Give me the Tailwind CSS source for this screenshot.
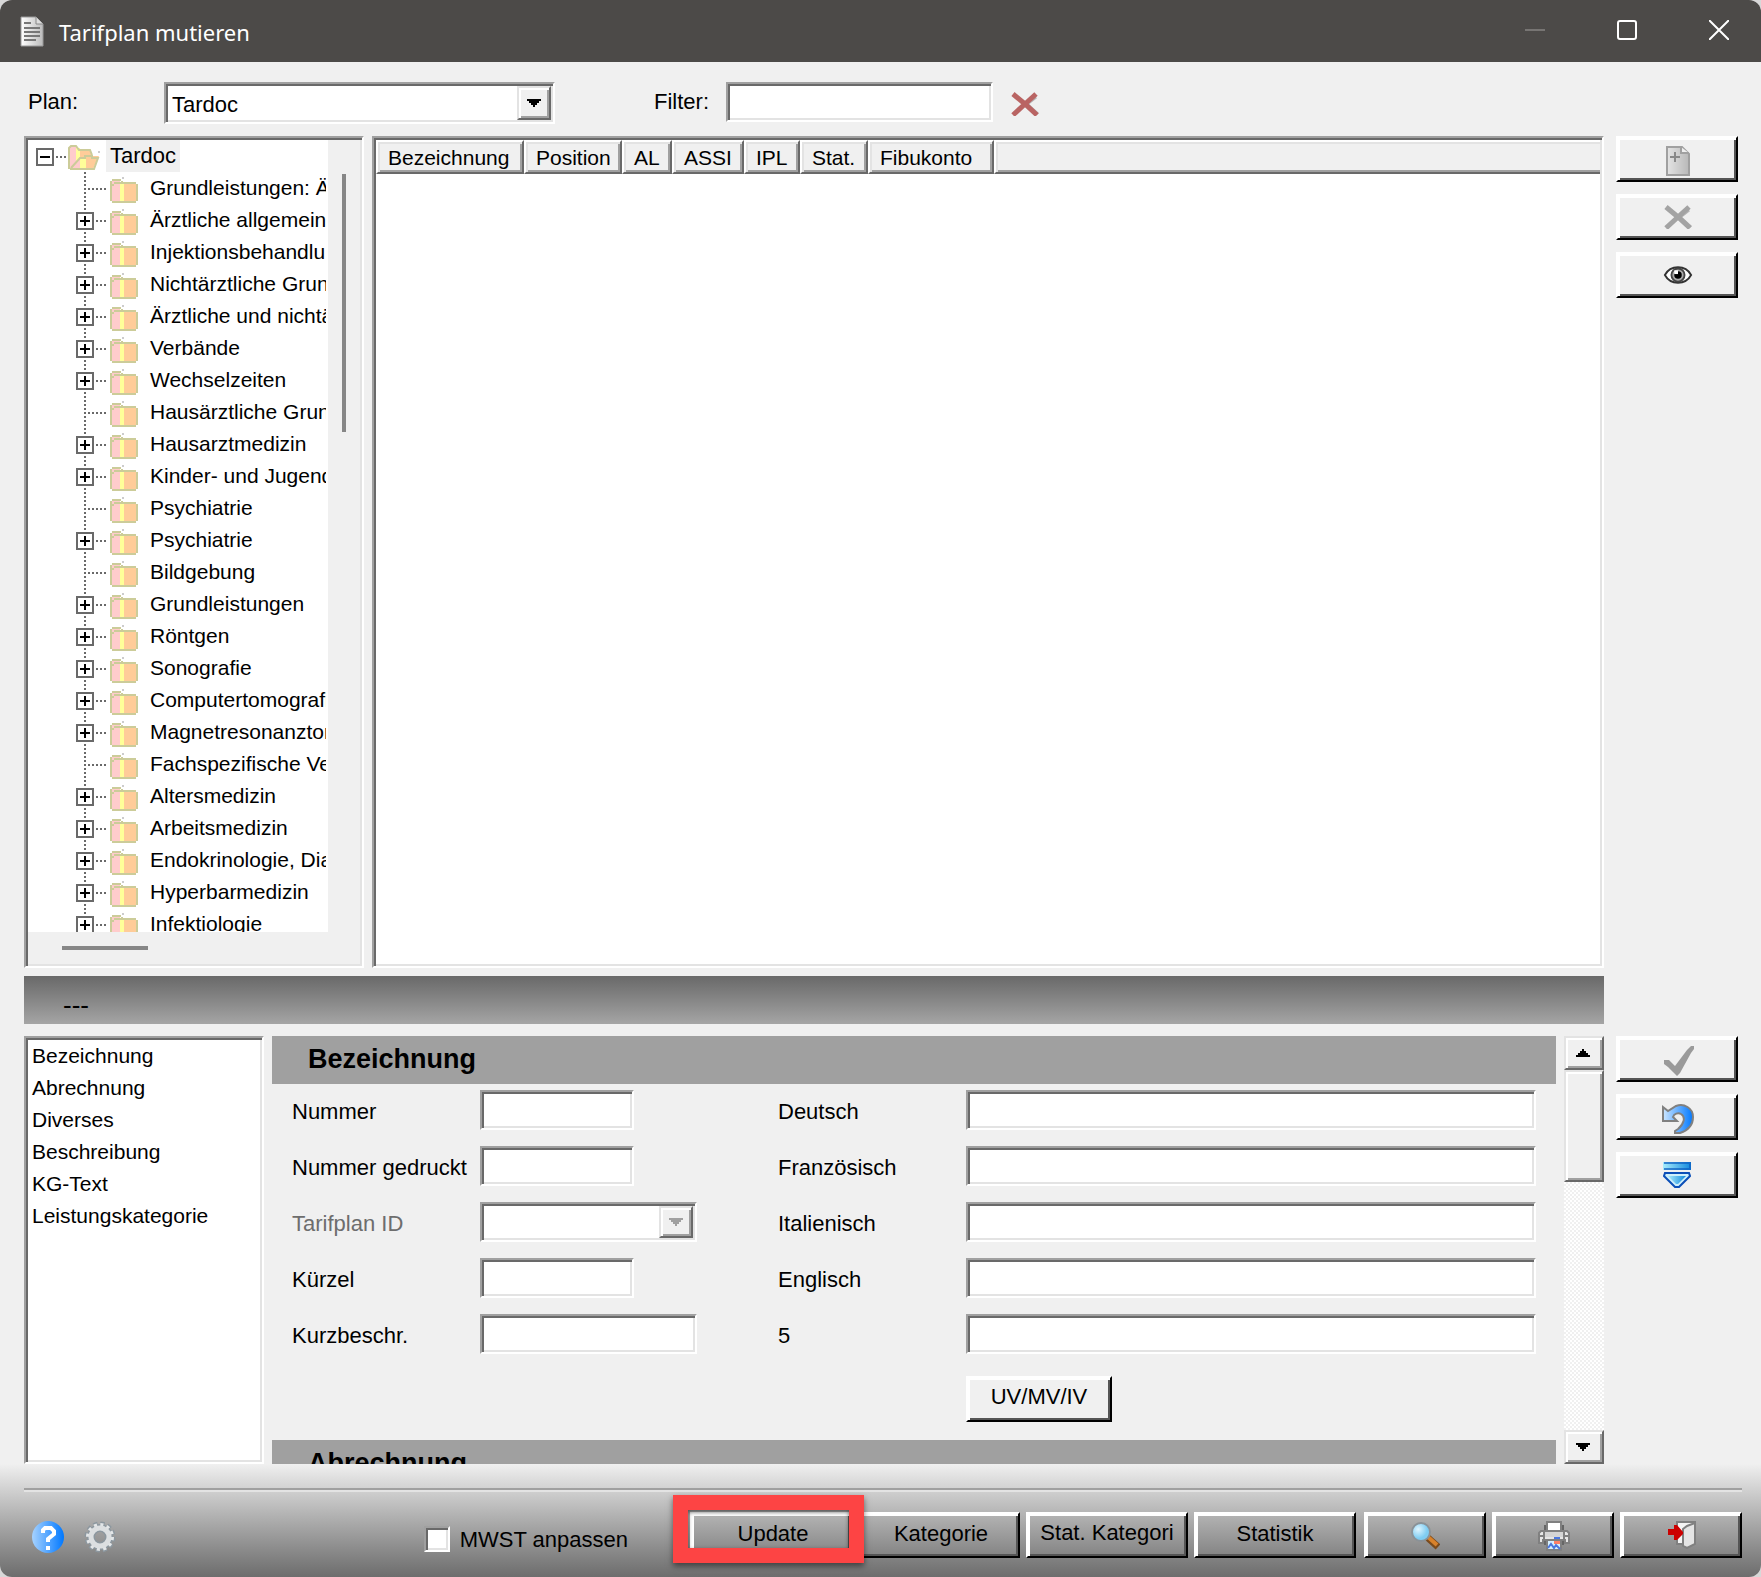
<!DOCTYPE html>
<html lang="de">
<head>
    <meta charset="UTF-8">
    <meta name="viewport" content="width=device-width, initial-scale=1.0">
    <title>Tarifplan mutieren</title>
    <script src="https://cdn.jsdelivr.net/npm/@tailwindcss/browser@4"></script>
</head>
<body class="bg-[#d8d8d8] font-['Liberation_Sans',sans-serif] text-[22px] text-black">

    <!-- Shared icons -->
    <svg class="hidden" aria-hidden="true">
        <symbol id="folder" viewBox="0 0 28 26">
            <path fill="#ffcccc" d="M2 3h8v21H2z"/>
            <path fill="#ffff99" d="M10 6h4v18h-4z"/>
            <path fill="#ffcc99" d="M14 6h12v18H14z"/>
            <path fill="#cccc99" d="M2 2h9v2H2zM0 4h2v20H0zM11 4h2v2h-2zM4 5h22v2H4zM2 7h2v2H2zM26 7h2v17h-2zM2 24h24v2H2z"/>
            <path fill="#ccc" d="M12 0h2v2h-2z"/>
        </symbol>
        <symbol id="folder-open" viewBox="0 0 32 26">
            <path fill="#ffcccc" d="M1 3l2-2h6v22l-6 1-2-2z"/>
            <path fill="#ffff99" d="M8 3h4v20H8z"/>
            <path fill="#ffcc99" d="M12 5h10l2 6h7l-6 13H12z"/>
            <path fill="#ffcccc" d="M12 12L3 24h9z"/>
            <path fill="#ffff99" d="M12 12h6v12h-6z"/>
            <path fill="none" stroke="#cccc99" stroke-width="2" d="M1 24V3l2-2h5l3 4h11l2 5M3 23l9-10h5v-2h7v2h6l-4 11H2"/>
            <path fill="#ccc" d="M30 6h2v2h-2z"/>
        </symbol>
        <symbol id="cross" viewBox="0 0 28 24">
            <path fill="none" stroke="#777" stroke-opacity=".5" stroke-width="3" d="M25 5L16 12l11 10"/>
            <path fill="none" stroke="currentColor" stroke-width="5" d="M2 2L14 12 26 23M25 2L14 12 2 23"/>
        </symbol>
    </svg>

    <div class="flex h-screen flex-col overflow-hidden rounded-xl bg-[#f0f0f0]">

        <!-- Title bar -->
        <header class="flex h-[62px] shrink-0 items-center bg-[#4c4a48] pl-5 text-white">
            <svg class="h-8 w-6" viewBox="0 0 24 32">
                <defs><linearGradient id="doc"><stop offset="0" stop-color="#fff"/><stop offset="1" stop-color="#bbb"/></linearGradient></defs>
                <path fill="url(#doc)" stroke="#999" d="M1 2h15l7 7v22H1z"/>
                <path fill="#ddd" stroke="#888" d="M16 2v7h7"/>
                <path stroke="#777" stroke-width="2" d="M4 8h7M4 13h16M4 17h16M4 21h16M4 25h12"/>
            </svg>
            <h1 class="ml-[15px] pt-0.5 font-['Noto_Sans',sans-serif] text-[22px]">Tarifplan mutieren</h1>
            <div class="ml-auto flex h-full items-center pb-0.5">
                <button class="flex h-full w-[92px] items-center justify-center" aria-label="Minimieren" disabled>
                    <svg class="size-5" viewBox="0 0 20 20"><path stroke="#777573" stroke-width="2" d="M0 10h20"/></svg>
                </button>
                <button class="flex h-full w-[92px] items-center justify-center" aria-label="Maximieren">
                    <svg class="size-5" viewBox="0 0 20 20"><rect x="1" y="1" width="18" height="18" rx="2" fill="none" stroke="#fff" stroke-width="2"/></svg>
                </button>
                <button class="flex h-full w-[88px] items-center justify-center pl-1" aria-label="Schliessen">
                    <svg class="size-5" viewBox="0 0 20 20"><path stroke="#fff" stroke-width="2" d="M0 0l20 20M20 0L0 20"/></svg>
                </button>
            </div>
        </header>

        <main class="flex min-h-0 flex-1 flex-col pt-5 pr-[23px] pl-6">

            <!-- Plan and filter -->
            <div class="mb-3 flex h-[42px] items-start">
                <label for="plan" class="w-[140px] pl-1 leading-10">Plan:</label>
                <div class="relative h-[42px] w-[391px] border-2 border-t-[#a0a0a0] border-r-white border-b-white border-l-[#a0a0a0] bg-white shadow-[inset_2px_2px_0_#696969,inset_-2px_-2px_0_#e3e3e3]">
                    <select id="plan" class="h-full w-full appearance-none bg-transparent pt-0.5 pl-1.5 text-[22px] outline-none">
                        <option>Tardoc</option>
                    </select>
                    <span class="pointer-events-none absolute top-0.5 right-0.5 bottom-0.5 flex w-[34px] items-center justify-center border-2 border-t-[#e3e3e3] border-r-[#696969] border-b-[#696969] border-l-[#e3e3e3] bg-[#f0f0f0] shadow-[inset_2px_2px_0_#fff,inset_-2px_-2px_0_#a0a0a0]">
                        <svg class="h-2 w-3.5" viewBox="0 0 14 8"><path d="M0 0h14v2h-2v2h-2v2H8v2H6V6H4V4H2V2H0z"/></svg>
                    </span>
                </div>
                <label for="filter" class="ml-[99px] w-[72px] leading-10">Filter:</label>
                <input id="filter" type="text" class="h-10 w-[267px] border-2 border-t-[#a0a0a0] border-r-white border-b-white border-l-[#a0a0a0] bg-white px-2 shadow-[inset_2px_2px_0_#696969,inset_-2px_-2px_0_#e3e3e3] outline-none">
                <button class="ml-4 flex h-11 w-8 items-center justify-center text-[#b96463]" aria-label="Filter löschen">
                    <svg class="h-6 w-7"><use href="#cross"/></svg>
                </button>
            </div>

            <div class="flex min-h-0 flex-1">
                <!-- Tree -->
                <nav class="mr-2 flex w-[340px] flex-col border-2 border-t-[#a0a0a0] border-r-white border-b-white border-l-[#a0a0a0] p-0.5 text-[21px] shadow-[inset_2px_2px_0_#696969,inset_-2px_-2px_0_#e3e3e3]">
                    <div class="flex min-h-0 flex-1">
                        <div class="min-w-0 flex-1 overflow-hidden border-r-2 border-white bg-white">
                            <div class="flex h-8 items-center pl-2">
                                <button aria-label="Tardoc schliessen">
                                    <svg class="h-8 w-8" viewBox="0 0 32 32">
                                        <rect x="1" y="9" width="16" height="16" fill="#fff" stroke="#696969" stroke-width="2"/>
                                        <path stroke="#000" stroke-width="2" d="M4 17h10"/>
                                        <path stroke="#696969" stroke-width="2" stroke-dasharray="2 2" d="M20 17h12"/>
                                    </svg>
                                </button>
                                <svg class="mt-1 h-[26px] w-8"><use href="#folder-open"/></svg>
                                <span class="ml-1.5 bg-[#f0f0f0] px-1 text-[22px] leading-8">Tardoc</span>
                            </div>
                            <ul id="tree"></ul>
                        </div>
                        <div class="flex w-8 justify-center pt-[34px]"><div class="h-[258px] w-1 bg-[#868686]"></div></div>
                    </div>
                    <div class="flex h-8 items-center pl-[34px]"><div class="h-1 w-[86px] bg-[#868686]"></div></div>
                </nav>

                <!-- Positions -->
                <div class="min-w-0 flex-1 border-2 border-t-[#a0a0a0] border-r-white border-b-white border-l-[#a0a0a0] bg-white p-0.5 text-[21px] shadow-[inset_2px_2px_0_#696969,inset_-2px_-2px_0_#e3e3e3]">
                    <table class="w-full table-fixed border-separate border-spacing-0 text-left">
                        <thead>
                            <tr class="h-[34px] bg-[#f0f0f0] leading-[28px]">
                                <th class="w-[148px] border-2 border-t-white border-r-[#696969] border-b-[#696969] border-l-white pt-0.5 pl-2.5 font-normal shadow-[inset_2px_2px_0_#e3e3e3,inset_-2px_-2px_0_#a0a0a0]">Bezeichnung</th>
                                <th class="w-[98px] border-2 border-t-white border-r-[#696969] border-b-[#696969] border-l-white pt-0.5 pl-2.5 font-normal shadow-[inset_2px_2px_0_#e3e3e3,inset_-2px_-2px_0_#a0a0a0]">Position</th>
                                <th class="w-[50px] border-2 border-t-white border-r-[#696969] border-b-[#696969] border-l-white pt-0.5 pl-2.5 font-normal shadow-[inset_2px_2px_0_#e3e3e3,inset_-2px_-2px_0_#a0a0a0]">AL</th>
                                <th class="w-[72px] border-2 border-t-white border-r-[#696969] border-b-[#696969] border-l-white pt-0.5 pl-2.5 font-normal shadow-[inset_2px_2px_0_#e3e3e3,inset_-2px_-2px_0_#a0a0a0]">ASSI</th>
                                <th class="w-[56px] border-2 border-t-white border-r-[#696969] border-b-[#696969] border-l-white pt-0.5 pl-2.5 font-normal shadow-[inset_2px_2px_0_#e3e3e3,inset_-2px_-2px_0_#a0a0a0]">IPL</th>
                                <th class="w-[68px] border-2 border-t-white border-r-[#696969] border-b-[#696969] border-l-white pt-0.5 pl-2.5 font-normal shadow-[inset_2px_2px_0_#e3e3e3,inset_-2px_-2px_0_#a0a0a0]">Stat.</th>
                                <th class="w-[126px] border-2 border-t-white border-r-[#696969] border-b-[#696969] border-l-white pt-0.5 pl-2.5 font-normal shadow-[inset_2px_2px_0_#e3e3e3,inset_-2px_-2px_0_#a0a0a0]">Fibukonto</th>
                                <td class="border-2 border-r-0 border-t-white border-b-[#696969] border-l-white shadow-[inset_2px_2px_0_#e3e3e3,inset_0_-2px_0_#a0a0a0]"></td>
                            </tr>
                        </thead>
                        <tbody></tbody>
                    </table>
                </div>

                <div class="ml-3 flex w-[122px] flex-col gap-3">
                    <button class="flex h-[46px] items-center justify-center border-2 border-t-white border-r-black border-b-black border-l-white pl-0.5 shadow-[inset_2px_2px_0_#fff,inset_-2px_-2px_0_#555]" aria-label="Neu" disabled>
                        <svg class="mt-1 h-[30px] w-6" viewBox="0 0 24 30">
                            <defs><linearGradient id="new"><stop offset="0" stop-color="#e4e4e4"/><stop offset="1" stop-color="#b8b8b8"/></linearGradient></defs>
                            <path fill="url(#new)" stroke="#a0a0a0" stroke-width="2" d="M1 1h15l7 7v21H1z"/>
                            <path fill="#eee" stroke="#a0a0a0" stroke-width="2" d="M15 1v6h8"/>
                            <path stroke="#888" stroke-width="2" d="M4 11h10M9 6v10"/>
                        </svg>
                    </button>
                    <button class="flex h-[46px] items-center justify-center border-2 border-t-white border-r-black border-b-black border-l-white pl-0.5 text-[#a3a3a3] shadow-[inset_2px_2px_0_#fff,inset_-2px_-2px_0_#555]" aria-label="Löschen" disabled>
                        <svg class="h-6 w-7"><use href="#cross"/></svg>
                    </button>
                    <button class="flex h-[46px] items-center justify-center border-2 border-t-white border-r-black border-b-black border-l-white pl-0.5 shadow-[inset_2px_2px_0_#fff,inset_-2px_-2px_0_#555]" aria-label="Anzeigen">
                        <svg class="h-5 w-[30px]" viewBox="0 0 32 20">
                            <path fill="#fff" stroke="#333" stroke-width="2" d="M2 10C8 -1 24 -1 30 10 24 21 8 21 2 10z"/>
                            <circle cx="16" cy="10" r="7" fill="#aaa" stroke="#444" stroke-width="2"/>
                            <circle cx="16" cy="10" r="4"/>
                            <path fill="#fff" d="M12 5h4v4h-4z"/>
                        </svg>
                    </button>
                </div>
            </div>

            <!-- Current position -->
            <div class="mt-2 mr-[134px] h-12 bg-linear-to-b from-[#696969] to-[#a5a5a5] pl-[39px] text-[26px] leading-[58px]">---</div>

            <div class="mt-3 flex h-[428px] shrink-0">
                <ul class="mr-2 w-60 border-2 border-t-[#a0a0a0] border-r-white border-b-white border-l-[#a0a0a0] bg-white p-0.5 pl-1.5 text-[21px] leading-8 shadow-[inset_2px_2px_0_#696969,inset_-2px_-2px_0_#e3e3e3]">
                    <li><a href="#bezeichnung">Bezeichnung</a></li>
                    <li><a href="#abrechnung">Abrechnung</a></li>
                    <li><a href="#diverses">Diverses</a></li>
                    <li><a href="#beschreibung">Beschreibung</a></li>
                    <li><a href="#kg-text">KG-Text</a></li>
                    <li><a href="#leistungskategorie">Leistungskategorie</a></li>
                </ul>

                <!-- Form -->
                <form class="min-w-0 flex-1 overflow-hidden">
                    <h2 id="bezeichnung" class="h-12 bg-[#a0a0a0] pl-9 text-[27px] leading-[46px] font-bold">Bezeichnung</h2>
                    <div class="grid grid-cols-[188px_298px_188px_1fr] gap-y-4 pt-1.5 pr-5 pl-5 leading-[44px]">
                        <label for="nummer" class="h-10">Nummer</label>
                        <input id="nummer" type="text" class="h-10 w-[154px] border-2 border-t-[#a0a0a0] border-r-white border-b-white border-l-[#a0a0a0] bg-white px-2 shadow-[inset_2px_2px_0_#696969,inset_-2px_-2px_0_#e3e3e3] outline-none">
                        <label for="deutsch" class="h-10">Deutsch</label>
                        <input id="deutsch" type="text" class="h-10 w-full border-2 border-t-[#a0a0a0] border-r-white border-b-white border-l-[#a0a0a0] bg-white px-2 shadow-[inset_2px_2px_0_#696969,inset_-2px_-2px_0_#e3e3e3] outline-none">

                        <label for="gedruckt" class="h-10">Nummer gedruckt</label>
                        <input id="gedruckt" type="text" class="h-10 w-[154px] border-2 border-t-[#a0a0a0] border-r-white border-b-white border-l-[#a0a0a0] bg-white px-2 shadow-[inset_2px_2px_0_#696969,inset_-2px_-2px_0_#e3e3e3] outline-none">
                        <label for="franz" class="h-10">Französisch</label>
                        <input id="franz" type="text" class="h-10 w-full border-2 border-t-[#a0a0a0] border-r-white border-b-white border-l-[#a0a0a0] bg-white px-2 shadow-[inset_2px_2px_0_#696969,inset_-2px_-2px_0_#e3e3e3] outline-none">

                        <label for="planid" class="h-10 text-[#6d6d6d]">Tarifplan ID</label>
                        <div class="relative h-10 w-[217px] border-2 border-t-[#a0a0a0] border-r-white border-b-white border-l-[#a0a0a0] bg-white shadow-[inset_2px_2px_0_#696969,inset_-2px_-2px_0_#e3e3e3]">
                            <select id="planid" class="h-full w-full appearance-none bg-transparent outline-none" disabled></select>
                            <span class="pointer-events-none absolute top-0.5 right-0.5 bottom-0.5 flex w-[34px] items-center justify-center border-2 border-t-[#e3e3e3] border-r-[#696969] border-b-[#696969] border-l-[#e3e3e3] bg-[#f0f0f0] shadow-[inset_2px_2px_0_#fff,inset_-2px_-2px_0_#a0a0a0]">
                                <svg class="h-2 w-3.5" viewBox="0 0 14 8"><path fill="#a0a0a0" d="M0 0h14v2h-2v2h-2v2H8v2H6V6H4V4H2V2H0z"/></svg>
                            </span>
                        </div>
                        <label for="ital" class="h-10">Italienisch</label>
                        <input id="ital" type="text" class="h-10 w-full border-2 border-t-[#a0a0a0] border-r-white border-b-white border-l-[#a0a0a0] bg-white px-2 shadow-[inset_2px_2px_0_#696969,inset_-2px_-2px_0_#e3e3e3] outline-none">

                        <label for="kuerzel" class="h-10">Kürzel</label>
                        <input id="kuerzel" type="text" class="h-10 w-[154px] border-2 border-t-[#a0a0a0] border-r-white border-b-white border-l-[#a0a0a0] bg-white px-2 shadow-[inset_2px_2px_0_#696969,inset_-2px_-2px_0_#e3e3e3] outline-none">
                        <label for="engl" class="h-10">Englisch</label>
                        <input id="engl" type="text" class="h-10 w-full border-2 border-t-[#a0a0a0] border-r-white border-b-white border-l-[#a0a0a0] bg-white px-2 shadow-[inset_2px_2px_0_#696969,inset_-2px_-2px_0_#e3e3e3] outline-none">

                        <label for="kurz" class="h-10">Kurzbeschr.</label>
                        <input id="kurz" type="text" class="h-10 w-[217px] border-2 border-t-[#a0a0a0] border-r-white border-b-white border-l-[#a0a0a0] bg-white px-2 shadow-[inset_2px_2px_0_#696969,inset_-2px_-2px_0_#e3e3e3] outline-none">
                        <label for="fuenf" class="h-10">5</label>
                        <input id="fuenf" type="text" class="h-10 w-full border-2 border-t-[#a0a0a0] border-r-white border-b-white border-l-[#a0a0a0] bg-white px-2 shadow-[inset_2px_2px_0_#696969,inset_-2px_-2px_0_#e3e3e3] outline-none">

                        <button type="button" class="col-start-4 mt-1.5 h-[46px] w-[146px] border-2 border-t-white border-r-black border-b-black border-l-white pb-1 leading-9 shadow-[inset_2px_2px_0_#fff,inset_-2px_-2px_0_#555]">UV/MV/IV</button>
                    </div>
                    <h2 id="abrechnung" class="mt-[18px] h-12 bg-[#a0a0a0] pl-9 text-[27px] leading-[46px] font-bold">Abrechnung</h2>
                </form>

                <!-- Scroll bar -->
                <div class="ml-2 flex w-10 flex-col bg-[repeating-conic-gradient(#fff_0_25%,#f0f0f0_0_50%)] bg-[length:4px_4px]">
                    <button class="flex h-[34px] items-center justify-center border-2 border-t-[#e3e3e3] border-r-[#696969] border-b-[#696969] border-l-[#e3e3e3] bg-[#f0f0f0] pr-0.5 shadow-[inset_2px_2px_0_#fff,inset_-2px_-2px_0_#a0a0a0]" aria-label="Nach oben">
                        <svg class="h-2 w-3.5" viewBox="0 0 14 8"><path d="M0 8h14V6h-2V4h-2V2H8V0H6v2H4v2H2v2H0z"/></svg>
                    </button>
                    <div class="h-28 border-2 border-t-[#e3e3e3] border-r-[#696969] border-b-[#696969] border-l-[#e3e3e3] bg-[#f0f0f0] shadow-[inset_2px_2px_0_#fff,inset_-2px_-2px_0_#a0a0a0]"></div>
                    <button class="mt-auto flex h-[34px] items-center justify-center border-2 border-t-[#e3e3e3] border-r-[#696969] border-b-[#696969] border-l-[#e3e3e3] bg-[#f0f0f0] pr-0.5 shadow-[inset_2px_2px_0_#fff,inset_-2px_-2px_0_#a0a0a0]" aria-label="Nach unten">
                        <svg class="h-2 w-3.5" viewBox="0 0 14 8"><path d="M0 0h14v2h-2v2h-2v2H8v2H6V6H4V4H2V2H0z"/></svg>
                    </button>
                </div>

                <div class="ml-3 flex w-[122px] flex-col gap-3">
                    <button class="flex h-[46px] items-center justify-center border-2 border-t-white border-r-black border-b-black border-l-white pl-1 shadow-[inset_2px_2px_0_#fff,inset_-2px_-2px_0_#555]" aria-label="Übernehmen" disabled>
                        <svg class="mt-1 h-[30px] w-[30px]" viewBox="0 0 30 30"><path fill="#9a9a9a" d="M0 14h5l6 6L23 4l4-4h3v3l-3 4-11 20-3 3-4-4-5-5-4-3z"/></svg>
                    </button>
                    <button class="flex h-[46px] items-center justify-center border-2 border-t-white border-r-black border-b-black border-l-white pl-0.5 shadow-[inset_2px_2px_0_#fff,inset_-2px_-2px_0_#555]" aria-label="Rückgängig">
                        <svg class="mt-1 h-[30px] w-8" viewBox="0 0 32 30">
                            <defs><linearGradient id="undo"><stop offset="0" stop-color="#cce6ff"/><stop offset="1" stop-color="#0078ff"/></linearGradient></defs>
                            <path fill="url(#undo)" stroke="#808080" stroke-width="2" d="M1 3v14h14l-4-4c1-3 5-5 8-3 5 3 3 10-3 15l-3 2v2h5C27 26 31 20 31 13 31 4 22-1 14 2L6 7z"/>
                        </svg>
                    </button>
                    <button class="flex h-[46px] items-center justify-center border-2 border-t-white border-r-black border-b-black border-l-white shadow-[inset_2px_2px_0_#fff,inset_-2px_-2px_0_#555]" aria-label="Mehr">
                        <svg class="h-[26px] w-7" viewBox="0 0 28 26">
                            <defs><linearGradient id="more"><stop offset="0" stop-color="#a8ecfc"/><stop offset="1" stop-color="#1188dd"/></linearGradient></defs>
                            <path fill="url(#more)" d="M0 0h28v8H0z"/>
                            <path fill="none" stroke="#0b5cc0" stroke-opacity=".7" stroke-width="2" d="M1 7h26V1H1"/>
                            <path fill="#cdeffb" stroke="#0b4fb8" stroke-width="2" d="M2 11h24l1 3-11 11h-4L1 14z"/>
                            <path fill="url(#more)" d="M5 14h18l-8 8h-2z"/>
                        </svg>
                    </button>
                </div>
            </div>
        </main>

        <!-- Button bar -->
        <footer class="shrink-0 bg-linear-to-b from-[#f0f0f0] to-[#6d6d6d] pt-6 pr-[19px] pb-[19px] pl-6">
            <div class="h-1 border-t-2 border-[#a0a0a0] bg-[#e3e3e3]"></div>
            <div class="mt-5 flex h-[46px] items-center gap-1.5 pl-2">
                <button class="mt-1 mr-3.5" aria-label="Hilfe">
                    <svg class="size-8" viewBox="0 0 32 32">
                        <defs><linearGradient id="help"><stop offset="0" stop-color="#a6d2ff"/><stop offset="1" stop-color="#0078ff"/></linearGradient></defs>
                        <circle cx="16" cy="16" r="16" fill="url(#help)"/>
                        <path fill="none" stroke="#fff" stroke-width="4" d="M11 12V9l2-2h6l3 3v3l-6 5v3"/>
                        <path fill="#fff" d="M14 25h4v4h-4z"/>
                    </svg>
                </button>
                <button class="mt-1" aria-label="Einstellungen">
                    <svg class="size-8" viewBox="0 0 32 32">
                        <circle cx="16" cy="16" r="13" fill="none" stroke="#8c979f" stroke-width="5" stroke-dasharray="4 2.8"/>
                        <circle cx="16" cy="16" r="9" fill="none" stroke="#8c979f" stroke-width="8"/>
                        <circle cx="16" cy="16" r="12" fill="none" stroke="#e3e6e8" stroke-width="4" stroke-dasharray="3 3.28"/>
                        <circle cx="16" cy="16" r="9" fill="none" stroke="#dcdfe1" stroke-width="5"/>
                    </svg>
                </button>
                <label class="mt-2 mr-14 ml-auto flex items-center gap-2.5">
                    <input type="checkbox" class="size-[26px] appearance-none border-2 border-t-[#a0a0a0] border-r-white border-b-white border-l-[#a0a0a0] bg-white shadow-[inset_2px_2px_0_#696969,inset_-2px_-2px_0_#e3e3e3]">
                    MWST anpassen
                </label>
                <div class="relative">
                    <button class="h-[46px] w-[162px] border-2 border-t-white border-r-black border-b-black border-l-white pb-1 pl-1 shadow-[inset_2px_2px_0_#fff,inset_-2px_-2px_0_#555]">Update</button>
                    <span class="pointer-events-none absolute -top-[17px] -left-[17px] h-[68px] w-[191px] border-[15px] border-[#fd4444] shadow-[0_3px_6px_rgba(0,0,0,0.5),inset_0_2px_4px_rgba(0,0,0,0.6)]"></span>
                </div>
                <button class="h-[46px] w-[162px] border-2 border-t-white border-r-black border-b-black border-l-white pb-1 pl-1 shadow-[inset_2px_2px_0_#fff,inset_-2px_-2px_0_#555]">Kategorie</button>
                <button class="h-[46px] w-[162px] border-2 border-t-white border-r-black border-b-black border-l-white pb-1.5 whitespace-nowrap shadow-[inset_2px_2px_0_#fff,inset_-2px_-2px_0_#555]">Stat. Kategori</button>
                <button class="mr-0.5 h-[46px] w-[162px] border-2 border-t-white border-r-black border-b-black border-l-white pb-1 shadow-[inset_2px_2px_0_#fff,inset_-2px_-2px_0_#555]">Statistik</button>
                <button class="flex h-[46px] w-[122px] items-center justify-center border-2 border-t-white border-r-black border-b-black border-l-white pt-0.5 shadow-[inset_2px_2px_0_#fff,inset_-2px_-2px_0_#555]" aria-label="Suchen">
                    <svg class="h-7 w-[30px]" viewBox="0 0 30 28">
                        <defs><radialGradient id="lens" cx=".35" cy=".35"><stop offset="0" stop-color="#dff5ff"/><stop offset="1" stop-color="#7fcdf2"/></radialGradient></defs>
                        <path stroke="#7a4a1c" stroke-width="7" d="M17 15l11 10"/>
                        <path stroke="#d9822b" stroke-width="4" d="M18 15l9 8"/>
                        <circle cx="11" cy="10" r="9" fill="url(#lens)" stroke="#8a9298" stroke-width="2"/>
                    </svg>
                </button>
                <button class="flex h-[46px] w-[122px] items-center justify-center border-2 border-t-white border-r-black border-b-black border-l-white pt-0.5 pl-0.5 shadow-[inset_2px_2px_0_#fff,inset_-2px_-2px_0_#555]" aria-label="Drucken">
                    <svg class="h-[30px] w-8" viewBox="0 0 32 30">
                        <path fill="#666" d="M6 4h20v20H6z"/>
                        <path fill="#fff" stroke="#808080" stroke-width="2" d="M9 1h14v10H9z"/>
                        <path fill="#e6e6e6" stroke="#808080" stroke-width="2" d="M3 10h26l2 2v10h-4v-3H5v3H1V12z"/>
                        <path stroke="#808080" stroke-width="2" d="M6 10v8M26 10v8M2 15h28"/>
                        <path fill="#d4d4d4" d="M7 11h18v5H7z"/>
                        <path stroke="#4a76e0" stroke-width="2" d="M16 17h6"/>
                        <path fill="#d5f0ff" stroke="#808080" stroke-width="2" d="M9 19h14v10H9z"/>
                        <path fill="#ff8066" d="M16 20h6v3h-6z"/>
                        <path fill="none" stroke="#4a76e0" stroke-width="2" d="M10 27l3-4 3 4 2-3 4 4"/>
                    </svg>
                </button>
                <button class="flex h-[46px] w-[122px] items-center justify-center border-2 border-t-white border-r-black border-b-black border-l-white pl-0.5 shadow-[inset_2px_2px_0_#fff,inset_-2px_-2px_0_#555]" aria-label="Beenden">
                    <svg class="h-7 w-7" viewBox="0 0 28 28">
                        <path fill="#f4f4f4" stroke="#808080" stroke-width="2" d="M9 1h18v21l-6 1H9z"/>
                        <path fill="#e4e4e4" stroke="#808080" stroke-width="2" d="M15 8l4-3 8-3v21l-8 4-4-2z"/>
                        <path fill="#cc0000" d="M0 8h6V4h3l6 7v2l-6 6H6v-5H0z"/>
                    </svg>
                </button>
            </div>
        </footer>
    </div>

    <script>
        // name and whether the entry can be expanded
        const entries = [
            ['Grundleistungen: Ärztliche', false],
            ['Ärztliche allgemeine', true],
            ['Injektionsbehandlungen', true],
            ['Nichtärztliche Grundleistungen', true],
            ['Ärztliche und nichtärztliche', true],
            ['Verbände', true],
            ['Wechselzeiten', true],
            ['Hausärztliche Grundleistungen', false],
            ['Hausarztmedizin', true],
            ['Kinder- und Jugendmedizin', true],
            ['Psychiatrie', false],
            ['Psychiatrie', true],
            ['Bildgebung', false],
            ['Grundleistungen', true],
            ['Röntgen', true],
            ['Sonografie', true],
            ['Computertomografie', true],
            ['Magnetresonanztomografie', true],
            ['Fachspezifische Verfahren', false],
            ['Altersmedizin', true],
            ['Arbeitsmedizin', true],
            ['Endokrinologie, Diabetologie', true],
            ['Hyperbarmedizin', true],
            ['Infektiologie', true]
        ];

        document.getElementById('tree').innerHTML = entries.map(([name, expandable]) => {
            const lines = `
                <svg class="h-8 w-[34px]" viewBox="0 0 34 32">
                    <path stroke="#696969" stroke-width="2" stroke-dasharray="2 2" d="M9 0v32M12 17h20"/>
                    ${expandable ? '<rect x="1" y="9" width="16" height="16" fill="#fff" stroke="#696969" stroke-width="2"/><path stroke="#000" stroke-width="2" d="M4 17h10M9 12v10"/>' : ''}
                </svg>`;
            return `
                <li class="flex h-8 items-center pl-12 whitespace-nowrap">
                    ${expandable ? `<button class="shrink-0" aria-label="${name} öffnen">${lines}</button>` : `<span class="shrink-0">${lines}</span>`}
                    <svg class="mt-1 h-[26px] w-7 shrink-0"><use href="#folder"/></svg>
                    <span class="ml-3">${name}</span>
                </li>`;
        }).join('');
    </script>
</body>
</html>
